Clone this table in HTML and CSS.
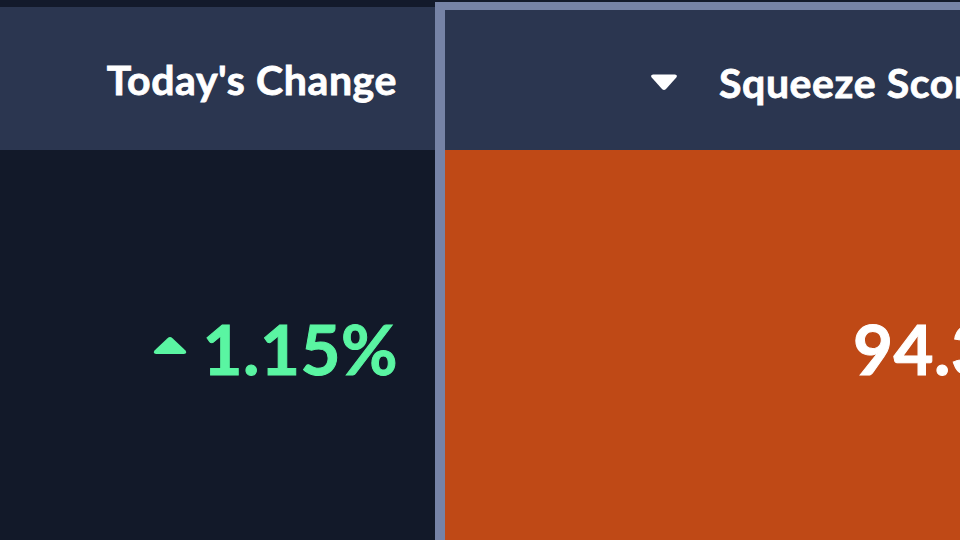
FILE: index.html
```html
<!DOCTYPE html>
<html lang="en">
<head>
<meta charset="utf-8">
<title>Squeeze table</title>
<link rel="stylesheet" href="styles.css">
</head>
<body>
<div class="table">
  <div class="col col-change">
    <div class="th">Today's Change</div>
    <div class="td">
      <span class="change up">
        <svg class="tri-up" width="36" height="19" viewBox="0 0 36 19" aria-hidden="true"><path d="M15.5 2.2 Q18 0 20.5 2.2 L33.5 14.5 Q35.5 17.5 32 18 L4 18 Q0.5 17.5 2.5 14.5 Z" fill="#5af5a2"/></svg>
        1.15%
      </span>
    </div>
  </div>
  <div class="col col-score sorted">
    <div class="th th-sorted">
      <svg class="tri-down" width="28" height="17" viewBox="0 0 28 17" aria-hidden="true"><path d="M3 0.5 L25 0.5 Q28 1 26.3 3.5 L16 15 Q14 17 12 15 L1.7 3.5 Q0 1 3 0.5 Z" fill="#ffffff"/></svg>
      <span>Squeeze Score</span>
    </div>
    <div class="td td-hot">94.3</div>
  </div>
</div>
</body>
</html>
```

FILE: styles.css
```css
html, body {
  margin: 0;
  padding: 0;
  background: #131a2b;
  width: 960px;
  height: 540px;
  overflow: hidden;
  font-family: Lato, "Noto Sans", sans-serif;
  font-weight: 700;
  color: #ffffff;
}

.table {
  display: grid;
  grid-template-columns: 435px 640px;
  align-items: start;
  padding-top: 7px;
}

.col {
  display: flex;
  flex-direction: column;
}

.th {
  background: #2b3650;
  height: 143px;
  display: flex;
  align-items: center;
  justify-content: flex-end;
  padding-right: 38px;
  padding-top: 2px;
  box-sizing: border-box;
  font-size: 41px;
  -webkit-text-stroke: 0.8px currentColor;
  letter-spacing: 0.6px;
}

.td {
  background: #121929;
  height: 397px;
  display: flex;
  align-items: center;
  justify-content: flex-end;
  padding-right: 37px;
  box-sizing: border-box;
  font-size: 69px;
  letter-spacing: 0.5px;
  -webkit-text-stroke: 1px currentColor;
}

.change {
  display: flex;
  align-items: center;
  gap: 15px;
  color: #5af5a2;
}

.tri-up {
  margin-top: -6px;
}

.sorted {
  margin-top: -5px;
  border-top: 8px solid #7683a6;
  border-left: 10px solid #7683a6;
}

.th-sorted {
  height: 140px;
  justify-content: flex-start;
  padding-right: 0;
  padding-left: 205px;
  padding-top: 4px;
  gap: 41px;
  white-space: nowrap;
}

.td-hot {
  background: #bf4916;
  justify-content: flex-start;
  padding-right: 0;
  padding-left: 408px;
  color: #ffffff;
}
```
